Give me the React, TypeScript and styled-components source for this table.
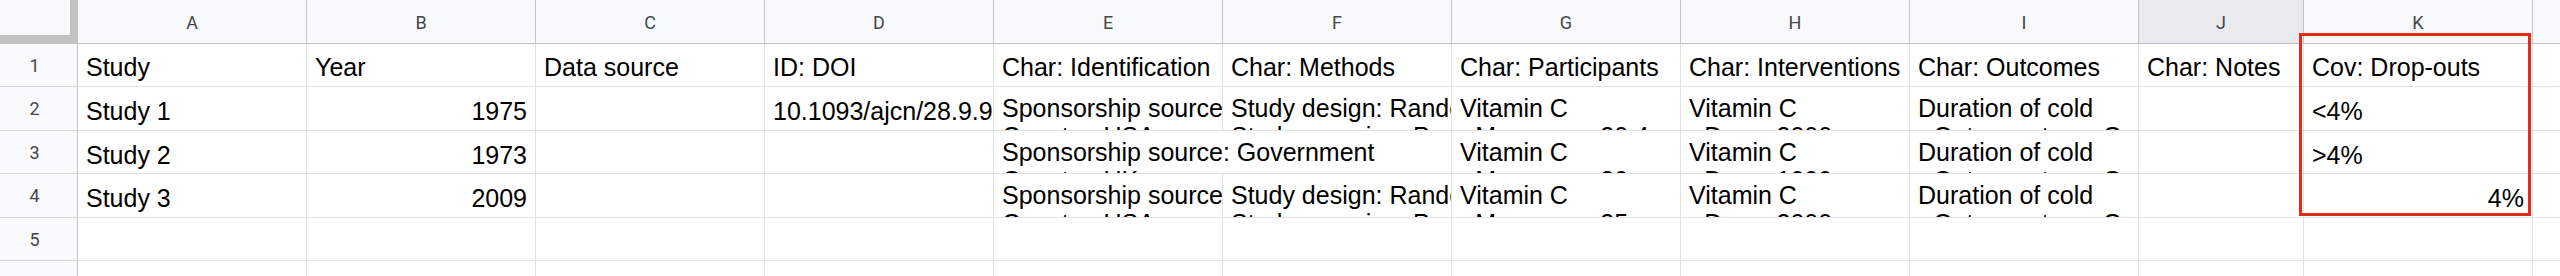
import { Fragment } from "react";
import styled, { createGlobalStyle } from "styled-components";

type CellData = { v: string; right?: boolean; span?: number };

const GlobalStyle = createGlobalStyle`
  html, body {
    margin: 0;
    padding: 0;
    background: #ffffff;
    overflow: hidden;
  }
  * {
    box-sizing: border-box;
  }
`;

const columns = ["A", "B", "C", "D", "E", "F", "G", "H", "I", "J", "K", "L"];
const rowHeights = [43, 44, 43, 44, 43, 44];

const sponsorUsa = "Sponsorship source: Industry\nCountry: USA";
const design = "Study design: Randomised controlled trial\nStudy grouping: Parallel group";
const outcome = "Duration of cold\n- Outcome type: Continuous";

const rows: CellData[][] = [
  [
    { v: "Study" },
    { v: "Year" },
    { v: "Data source" },
    { v: "ID: DOI" },
    { v: "Char: Identification" },
    { v: "Char: Methods" },
    { v: "Char: Participants" },
    { v: "Char: Interventions" },
    { v: "Char: Outcomes" },
    { v: "Char: Notes" },
    { v: "Cov: Drop-outs" },
    { v: "" },
  ],
  [
    { v: "Study 1" },
    { v: "1975", right: true },
    { v: "" },
    { v: "10.1093/ajcn/28.9.959" },
    { v: sponsorUsa },
    { v: design },
    { v: "Vitamin C\n- Mean age: 20.4 years" },
    { v: "Vitamin C\n- Dose: 2000 mg" },
    { v: outcome },
    { v: "" },
    { v: "<4%" },
    { v: "" },
  ],
  [
    { v: "Study 2" },
    { v: "1973", right: true },
    { v: "" },
    { v: "" },
    { v: "Sponsorship source: Government\nCountry: UK", span: 2 },
    { v: "Vitamin C\n- Mean age: 30 years" },
    { v: "Vitamin C\n- Dose: 1000 mg" },
    { v: outcome },
    { v: "" },
    { v: ">4%" },
    { v: "" },
  ],
  [
    { v: "Study 3" },
    { v: "2009", right: true },
    { v: "" },
    { v: "" },
    { v: sponsorUsa },
    { v: design },
    { v: "Vitamin C\n- Mean age: 35 years" },
    { v: "Vitamin C\n- Dose: 2000 mg" },
    { v: outcome },
    { v: "" },
    { v: "4%", right: true },
    { v: "" },
  ],
  [],
  [],
];

const App = () => (
  <>
    <GlobalStyle />
    <Sheet>
      <Corner>
        <CornerBox />
      </Corner>
      {columns.map((c) => (
        <ColHead key={c} $active={c === "J"}>
          {c}
        </ColHead>
      ))}
      {rows.map((row, r) => (
        <Fragment key={r}>
          <RowHead $h={rowHeights[r]}>{r + 1}</RowHead>
          {row.length === 0
            ? columns.map((c) => <Cell key={c} />)
            : row.map((cell, i) => (
                <Cell
                  key={i}
                  $right={cell.right}
                  $multi={cell.v.includes("\n")}
                  $head={r === 0}
                  $span={cell.span ?? 1}
                >
                  {cell.v}
                </Cell>
              ))}
        </Fragment>
      ))}
      <Highlight />
    </Sheet>
  </>
);

export default App;

const Sheet = styled.div`
  position: relative;
  display: grid;
  grid-template-columns: 78px repeat(9, 229px) 165px 229px 229px;
  grid-template-rows: 44px ${rowHeights.map((h) => `${h}px`).join(" ")};
  width: 2560px;
  height: 276px;
  overflow: hidden;
  background: #ffffff;
  font-family: "Liberation Sans", Arial, sans-serif;
  color: #000000;
`;

const Corner = styled.div`
  background: #c2c2c2;
  border-right: 1px solid #c0c0c0;
  border-bottom: 1px solid #c0c0c0;
`;

const CornerBox = styled.div`
  width: 70px;
  height: 35px;
  background: #f8f9fa;
`;

const ColHead = styled.div<{ $active?: boolean }>`
  display: flex;
  align-items: center;
  justify-content: center;
  padding-top: 1px;
  background: ${({ $active }) => ($active ? "#e8eaed" : "#f8f9fa")};
  border-right: 1px solid #c4c4c4;
  border-bottom: 1px solid #c0c0c0;
  font-family: Roboto, "Liberation Sans", sans-serif;
  font-size: 18px;
  color: #444746;
`;

const RowHead = styled.div<{ $h: number }>`
  display: flex;
  align-items: center;
  justify-content: center;
  padding-right: 8px;
  height: ${({ $h }) => $h}px;
  background: #f8f9fa;
  border-right: 1px solid #c0c0c0;
  border-bottom: 1px solid #d6d6d6;
  font-family: Roboto, "Liberation Sans", sans-serif;
  font-size: 18px;
  color: #444746;
`;

const Cell = styled.div<{
  $right?: boolean;
  $multi?: boolean;
  $head?: boolean;
  $span?: number;
}>`
  grid-column: span ${({ $span }) => $span ?? 1};
  overflow: hidden;
  white-space: pre;
  padding: ${({ $multi, $head }) => ($multi ? "7px" : $head ? "9px" : "10px")} 8px 0 8px;
  text-align: ${({ $right }) => ($right ? "right" : "left")};
  font-size: 25px;
  line-height: 28px;
  border-right: 1px solid #e2e2e2;
  border-bottom: 1px solid #e2e2e2;
`;

const Highlight = styled.div`
  position: absolute;
  left: 2299px;
  top: 33px;
  width: 232px;
  height: 183px;
  border: 3px solid #e42a1f;
  pointer-events: none;
`;
